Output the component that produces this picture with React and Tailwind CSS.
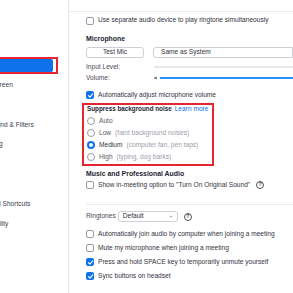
import React from 'react';

const font = { fontFamily: '"Liberation Sans", Arial, sans-serif' };

function Check({ on }) {
  return on ? (
    <span className="w-[8px] h-[8px] rounded-[2px] bg-[#0e72ed] flex items-center justify-center shrink-0">
      <svg viewBox="0 0 10 10" className="w-[7px] h-[7px]">
        <path d="M2 5.2 L4.2 7.3 L8.2 2.8" fill="none" stroke="#fff" strokeWidth="1.6" strokeLinecap="round" strokeLinejoin="round" />
      </svg>
    </span>
  ) : (
    <span className="w-[8px] h-[8px] rounded-[2px] border border-[#9a9aa6] bg-white shrink-0" />
  );
}

function Radio({ on }) {
  return on ? (
    <span className="w-[8px] h-[8px] rounded-full border-[2.5px] border-[#0e72ed] bg-white shrink-0" />
  ) : (
    <span className="w-[8px] h-[8px] rounded-full border border-[#9a9aa6] bg-white shrink-0" />
  );
}

function Help() {
  return (
    <span className="w-[8px] h-[8px] rounded-full border border-[#555] text-[5.5px] leading-none flex items-center justify-center text-[#444] font-bold shrink-0">?</span>
  );
}

function CheckRow({ on, children, h = 'h-[14px]', extra }) {
  return (
    <div className={`${h} flex items-center gap-[4px]`}>
      <Check on={on} />
      <span className="text-[#333340] whitespace-nowrap">{children}</span>
      {extra}
    </div>
  );
}

const side = ['General', 'Video', 'Audio', 'Share Screen', 'Chat', 'Background & Filters', 'Recording', 'Profile', 'Statistics', 'Keyboard Shortcuts', 'Accessibility'];

export default function App() {
  return (
    <div className="w-[293px] h-[293px] bg-white overflow-hidden flex text-[6.6px] leading-none" style={font}>
      <div className="w-[69px] shrink-0 border-r border-[#e6e6e9] pt-[16px] overflow-hidden">
        {side.map((s) =>
          s === 'Audio' ? (
            <div key={s} className="h-[19.8px] flex items-center">
              <div className="ml-[-10px] w-[68px] h-[17px] border-2 border-[#e3262f] pr-[3px]">
                <div className="h-full bg-[#0e72ed] rounded-r-[2px]" />
              </div>
            </div>
          ) : (
            <div key={s} className="h-[19.8px] flex items-center whitespace-nowrap text-[#3d3d4a] ml-[-27.5px]">{s}</div>
          )
        )}
      </div>

      <div className="flex-1 flex flex-col pl-[17px]">
        <div className="h-[12px] border-b border-[#ececee] ml-[-17px] shrink-0" />
        <CheckRow h="h-[17px]">Use separate audio device to play ringtone simultaneously</CheckRow>

        <div className="mt-[3px] h-[14px] flex items-center font-bold text-[6.9px] text-[#232333]">Microphone</div>
        <div className="mt-[1px] h-[11px] flex gap-[9px]">
          <div className="w-[58px] h-full border border-[#cfcfd6] rounded-[3px] flex items-center justify-center text-[#333340]">Test Mic</div>
          <div className="flex-1 h-full border border-[#cfcfd6] rounded-l-[3px] flex items-center pl-[7px] text-[#333340] whitespace-nowrap">Same as System</div>
        </div>

        <div className="mt-[3px] h-[12px] flex items-center">
          <span className="w-[68px] text-[#4a4a58]">Input Level:</span>
          <div className="flex-1 h-[2px] bg-[#e8e8ec]" />
        </div>
        <div className="h-[10px] flex items-center">
          <span className="w-[68px] text-[#4a4a58]">Volume:</span>
          <svg viewBox="0 0 4 4" className="w-[3px] h-[4px] shrink-0">
            <path d="M0 1.2 H1.3 L3.5 0 V4 L1.3 2.8 H0 Z" fill="#55555f" />
          </svg>
          <div className="ml-[3px] flex-1 h-[1.5px] bg-[#2d8cff]" />
        </div>

        <div className="mt-[6px]">
          <CheckRow on h="h-[12px]">Automatically adjust microphone volume</CheckRow>
        </div>

        <div className="mt-[2px] ml-[-4px] w-[132px] border-2 border-[#e3262f] pl-[3px] pb-[1px] flex flex-col">
          <div className="h-[8px] flex items-center gap-[3px] whitespace-nowrap">
            <span className="font-bold text-[6.3px] text-[#232333]">Suppress background noise</span>
            <span className="text-[#0e72ed]">Learn more</span>
          </div>
          <div className="mt-[2px] h-[12px] flex items-center gap-[4px] whitespace-nowrap">
            <Radio /><span className="text-[#5a5a66]">Auto</span>
          </div>
          <div className="h-[12px] flex items-center gap-[4px] whitespace-nowrap">
            <Radio /><span className="text-[#5a5a66]">Low</span><span className="text-[#a0a0aa]">(faint background noises)</span>
          </div>
          <div className="h-[12px] flex items-center gap-[4px] whitespace-nowrap">
            <Radio on /><span className="text-[#333340]">Medium</span><span className="text-[#a0a0aa]">(computer fan, pen taps)</span>
          </div>
          <div className="h-[12px] flex items-center gap-[4px] whitespace-nowrap">
            <Radio /><span className="text-[#5a5a66]">High</span><span className="text-[#a0a0aa]">(typing, dog barks)</span>
          </div>
        </div>

        <div className="mt-[2px] h-[12px] flex items-center font-bold text-[6.9px] text-[#232333] whitespace-nowrap">Music and Professional Audio</div>
        <div className="h-[10px] flex items-center gap-[4px]">
          <Check />
          <span className="text-[#333340] whitespace-nowrap">Show in-meeting option to "Turn On Original Sound"</span>
          <span className="ml-[2px]"><Help /></span>
        </div>

        <div className="mt-[14px] border-t border-[#ececee]" />

        <div className="mt-[6px] h-[11px] flex items-center gap-[2px]">
          <span className="text-[#4a4a58]">Ringtones</span>
          <div className="w-[60px] h-full border border-[#cfcfd6] rounded-[3px] flex items-center justify-between pl-[4px] pr-[4px] text-[#333340]">
            <span>Default</span>
            <svg viewBox="0 0 6 4" className="w-[4px] h-[3px]">
              <path d="M0.8 0.8 L3 3 L5.2 0.8" fill="none" stroke="#666" strokeWidth="0.9" />
            </svg>
          </div>
          <span className="ml-[4px]"><Help /></span>
        </div>

        <div className="mt-[5px]">
          <CheckRow>Automatically join audio by computer when joining a meeting</CheckRow>
          <CheckRow>Mute my microphone when joining a meeting</CheckRow>
          <CheckRow on>Press and hold SPACE key to temporarily unmute yourself</CheckRow>
          <CheckRow on>Sync buttons on headset</CheckRow>
        </div>
      </div>
    </div>
  );
}
